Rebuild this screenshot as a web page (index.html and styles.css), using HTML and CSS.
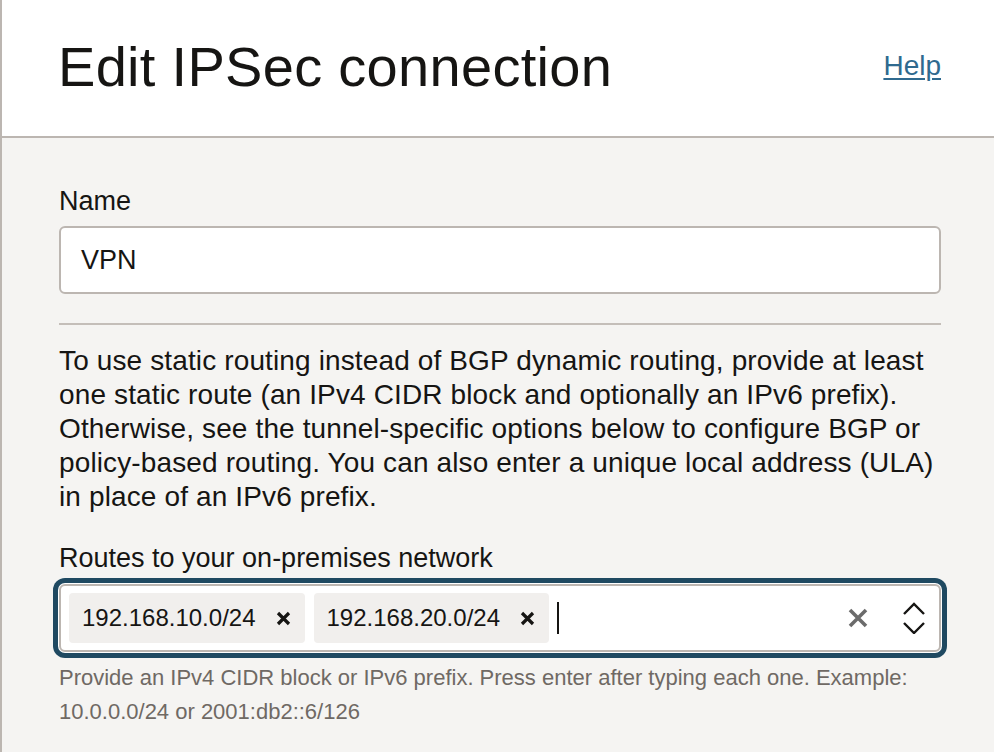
FILE: index.html
```html
<!DOCTYPE html>
<html lang="en">
<head>
<meta charset="utf-8">
<title>Edit IPSec connection</title>
<link rel="stylesheet" href="styles.css">
</head>
<body>
<div class="panel">
  <header class="header">
    <h1 class="title">Edit IPSec connection</h1>
    <a class="help" href="#">Help</a>
  </header>
  <main class="body">
    <div class="field">
      <label class="label">Name</label>
      <div class="input">VPN</div>
    </div>
    <hr class="divider">
    <p class="desc">To use static routing instead of BGP dynamic routing, provide at least one static route (an IPv4 CIDR block and optionally an IPv6 prefix). Otherwise, see the tunnel-specific options below to configure BGP or policy-based routing. You can also enter a unique local address (ULA) in place of an IPv6 prefix.</p>
    <div class="field routes">
      <label class="label">Routes to your on-premises network</label>
      <div class="multi">
        <span class="chip">192.168.10.0/24
          <svg class="chip-x" width="15" height="15" viewBox="0 0 15 15"><path d="M2 2 L13 13 M13 2 L2 13"/></svg>
        </span>
        <span class="chip">192.168.20.0/24
          <svg class="chip-x" width="15" height="15" viewBox="0 0 15 15"><path d="M2 2 L13 13 M13 2 L2 13"/></svg>
        </span>
        <span class="cursor"></span>
        <span class="spacer"></span>
        <svg class="clear" width="20" height="20" viewBox="0 0 20 20"><path d="M2 2 L18 18 M18 2 L2 18"/></svg>
        <svg class="chev" width="22" height="32" viewBox="0 0 22 32"><path d="M1 12 L11 2 L21 12 M1 21 L11 31 L21 21"/></svg>
      </div>
      <p class="hint">Provide an IPv4 CIDR block or IPv6 prefix. Press enter after typing each one. Example: 10.0.0.0/24 or 2001:db2::6/126</p>
    </div>
  </main>
</div>
</body>
</html>
```

FILE: styles.css
```css
* { box-sizing: border-box; }
html, body {
  margin: 0;
  padding: 0;
  background: #f5f4f2;
  font-family: "Liberation Sans", Arial, Helvetica, sans-serif;
  color: #161513;
}
.panel {
  min-height: 100vh;
  border-left: 2px solid #bcb6b1;
  background: #f5f4f2;
}
.header {
  height: 138px;
  background: #ffffff;
  border-bottom: 2px solid #bcb6b1;
  display: flex;
  justify-content: space-between;
  align-items: flex-start;
  padding: 33px 53px 0 56px;
}
.title {
  margin: 0;
  font-size: 56px;
  line-height: 68px;
  font-weight: 400;
  letter-spacing: 0.3px;
}
.help {
  margin-top: 16px;
  font-size: 28px;
  line-height: 34px;
  color: #2f6a8f;
  text-decoration: underline;
  text-underline-offset: 3px;
  text-decoration-thickness: 2px;
}
.body {
  padding: 46px 53px 30px 57px;
}
.field {
  display: flex;
  flex-direction: column;
}
.label {
  font-size: 27px;
  line-height: 34px;
}
.input {
  margin-top: 8px;
  height: 68px;
  background: #fff;
  border: 2px solid #bcb6b1;
  border-radius: 6px;
  padding-left: 20px;
  display: flex;
  align-items: center;
  font-size: 27px;
}
.divider {
  margin: 29px 0 0 0;
  border: 0;
  height: 2px;
  background: #c4beb9;
}
.desc {
  margin: 19px 0 0 0;
  font-size: 28px;
  line-height: 34px;
  letter-spacing: 0.13px;
}
.routes {
  margin-top: 27px;
}
.multi {
  margin-top: 9px;
  height: 68px;
  background: #fff;
  border: 2px solid #bcb6b1;
  border-radius: 6px;
  box-shadow: 0 0 0 1px #ffffff, 0 0 0 6px #1f4961;
  padding: 7px 14px 7px 8px;
  display: flex;
  align-items: center;
}
.chip {
  height: 50px;
  background: #f1efed;
  border-radius: 4px;
  display: flex;
  align-items: center;
  padding: 0 14px 0 13px;
  gap: 20px;
  font-size: 24px;
  margin-right: 9px;
}
.chip-x {
  display: block;
  fill: none;
  stroke: #161513;
  stroke-width: 3.2;
}
.cursor {
  width: 2px;
  height: 32px;
  background: #161513;
  margin-left: -1px;
}
.spacer { flex: 1; }
.clear {
  display: block;
  fill: none;
  stroke: #6b6b6b;
  stroke-width: 3.6;
  margin-right: 35px;
}
.chev {
  display: block;
  fill: none;
  stroke: #161513;
  stroke-width: 2.4;
}
.hint {
  margin: 9px 0 0 0;
  font-size: 22px;
  line-height: 34px;
  color: #6f6964;
}
```
